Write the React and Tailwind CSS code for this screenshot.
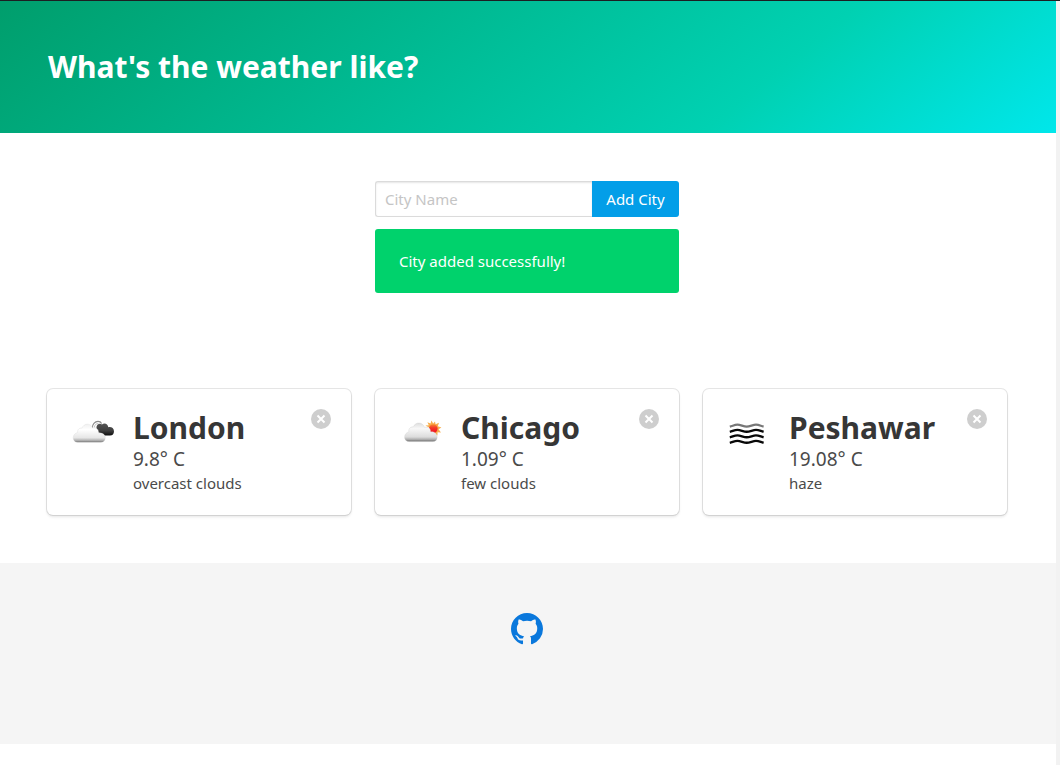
import React, { useState } from "react";

function OvercastIcon() {
  return (
    <svg viewBox="0 0 50 50" className="size-[50px]" aria-hidden="true">
      <defs>
        <linearGradient id="overcast-light" x1="0" y1="0" x2="0" y2="1">
          <stop offset="0" stopColor="#f0f0f0" />
          <stop offset="0.3" stopColor="#ffffff" />
          <stop offset="0.75" stopColor="#e6e6e6" />
          <stop offset="0.9" stopColor="#b0b0b0" />
          <stop offset="1" stopColor="#707070" />
        </linearGradient>
        <linearGradient id="overcast-dark" x1="0" y1="0" x2="0" y2="1">
          <stop offset="0" stopColor="#555555" />
          <stop offset="0.6" stopColor="#3e3e3e" />
          <stop offset="1" stopColor="#0c0c0c" />
        </linearGradient>
      </defs>
      <path d="M25.4 19C25 15.4 28 12.4 31 12.4C32.6 12.4 34 13.2 34.6 14.4" fill="none" stroke="#8a8a8a" strokeWidth="1.1" />
      <path d="M27.4 18.4C27.4 16 29.4 14.2 31.4 14.6" fill="none" stroke="#b4b4b4" strokeWidth="0.8" />
      <path d="M29.6 17.5C30 14.6 33.4 13.8 35 15.6C37 13.4 41 14.6 41.3 18.2C44 17.4 47 19 47 22.2C47 24.8 45.5 26.6 43 26.6H36C34.5 26.6 33.6 25.4 33.4 23.8C31 24 30 22.6 29.8 20.8C29.2 19.8 29.4 18.8 29.6 17.5Z" fill="url(#overcast-dark)" />
      <path d="M10.5 33.3C7.8 33.3 6.2 31.2 6.2 28.8C6.2 26 8.2 24 10.6 23.6C10.2 20.6 12.6 18.6 15 19.2C16.4 14.4 23.4 13.4 25.6 18.8C29 18 32 20 31.6 24.2C35.4 23.4 38.3 25.6 38.3 28.8C38.3 31.4 36.8 33.3 34 33.3Z" fill="url(#overcast-light)" stroke="#d4d4d4" strokeWidth="0.3" />
    </svg>
  );
}

function FewCloudsIcon() {
  return (
    <svg viewBox="0 0 50 50" className="size-[50px]" aria-hidden="true">
      <defs>
        <linearGradient id="few-light" x1="0" y1="0" x2="0" y2="1">
          <stop offset="0" stopColor="#dedede" />
          <stop offset="0.3" stopColor="#f8f8f8" />
          <stop offset="0.75" stopColor="#dcdcdc" />
          <stop offset="0.9" stopColor="#a8a8a8" />
          <stop offset="1" stopColor="#666666" />
        </linearGradient>
        <linearGradient id="few-sun" x1="0" y1="0" x2="0" y2="1">
          <stop offset="0" stopColor="#f88a2e" />
          <stop offset="0.4" stopColor="#f43a2a" />
          <stop offset="1" stopColor="#f00c1e" />
        </linearGradient>
      </defs>
      <path d="M36.4 11.6L38.2 14.4L40 12.4L40.6 15.2L44 13.8L42.8 17.2L46.4 18.6L43.6 20.2L46 23.6L42.6 23.2L42.4 26.6L38 25L33 22L34 18.4L30.4 16.6L33.8 16.2L32.4 13.2L35.6 14.6Z" fill="#f7ae4e" />
      <circle cx="38.3" cy="19.6" r="4.3" fill="url(#few-sun)" />
      <path d="M14 32.6C11.2 32.6 9.6 30.6 9.6 28.2C9.6 25.4 11.4 23.4 13.8 23C13.2 19.6 15.6 17.6 18.4 17.8C20.2 12.6 27.8 12.8 29.6 18.4C32.6 17.2 35.8 19.2 35.6 22.8C39.6 22.2 42.2 24.8 42.2 28.2C42.2 30.8 40.6 32.6 38 32.6Z" fill="url(#few-light)" stroke="#c8c8c8" strokeWidth="0.3" />
    </svg>
  );
}

function HazeIcon() {
  return (
    <svg viewBox="0 0 50 50" className="size-[50px]" fill="none" stroke="#080808" strokeWidth="2.4" aria-hidden="true">
      <path d="M6.8 17.6C10 16.8 11.5 15.7 14.5 15.7S20.5 17.6 23.7 17.6S30 15.7 33 15.7S37.5 16.8 40.6 17.6" stroke="#777777" strokeWidth="2.2" />
      <path d="M6.8 22.8C10 22 11.5 20.9 14.5 20.9S20.5 22.8 23.7 22.8S30 20.9 33 20.9S37.5 22 40.6 22.8" />
      <path d="M6.8 28.3C10 27.5 11.5 26.4 14.5 26.4S20.5 28.3 23.7 28.3S30 26.4 33 26.4S37.5 27.5 40.6 28.3" />
      <path d="M6.8 33.8C10 33 11.5 31.9 14.5 31.9S20.5 33.8 23.7 33.8S30 31.9 33 31.9S37.5 33 40.6 33.8" />
    </svg>
  );
}

const initialCities = [
  { name: "London", temperature: "9.8° C", description: "overcast clouds", Icon: OvercastIcon },
  { name: "Chicago", temperature: "1.09° C", description: "few clouds", Icon: FewCloudsIcon },
  { name: "Peshawar", temperature: "19.08° C", description: "haze", Icon: HazeIcon },
];

function CityCard({ city, onDelete }) {
  const { name, temperature, description, Icon } = city;
  return (
    <article className="flex items-start gap-4 rounded-md bg-white p-5 shadow-[0_2px_3px_rgba(10,10,10,0.1),0_0_0_1px_rgba(10,10,10,0.1)]">
      <Icon />
      <div className="min-w-0 flex-1 text-[#4a4a4a]">
        <h2 className="text-3xl leading-[38px] font-bold text-[#363636]">{name}</h2>
        <p className="text-[19px] leading-6">{temperature}</p>
        <p className="text-[15px] leading-6">{description}</p>
      </div>
      <button
        type="button"
        aria-label={"Remove " + name}
        onClick={onDelete}
        className="flex size-5 shrink-0 items-center justify-center rounded-full bg-[#cecece] text-white"
      >
        <svg viewBox="0 0 10 10" className="size-[10px]" stroke="currentColor" strokeWidth="2" aria-hidden="true">
          <path d="M1.5 1.5L8.5 8.5M8.5 1.5L1.5 8.5" />
        </svg>
      </button>
    </article>
  );
}

export default function App() {
  const [cities, setCities] = useState(initialCities);
  return (
    <div className="flex min-h-screen flex-col border-t border-[#1c1f22] bg-white font-['Noto_Sans',sans-serif]">
      <div className="flex flex-1">
        <div className="min-w-0 flex-1">
          <header className="bg-[linear-gradient(141deg,#009e6c_0%,#00d1b2_71%,#00e7eb_100%)] px-12 py-12">
            <h1 className="text-3xl leading-9 font-bold text-white">What's the weather like?</h1>
          </header>

          <section className="grid grid-cols-3 gap-6 py-12 pr-[49px] pl-[47px]">
            <div className="col-start-2 flex flex-col gap-3">
              <form className="flex h-9" onSubmit={(event) => event.preventDefault()}>
                <input
                  type="text"
                  aria-label="City Name"
                  placeholder="City Name"
                  className="min-w-0 flex-1 rounded-l-[3px] border border-r-0 border-[#dbdbdb] px-[9px] text-[15px] text-[#363636] shadow-[inset_0_1px_2px_rgba(10,10,10,0.1)] outline-none placeholder:text-[#c5c5c5]"
                />
                <button type="submit" className="w-[87px] rounded-r-[3px] bg-[#039ee8] text-[15px] text-white">
                  Add City
                </button>
              </form>
              <div role="status" className="rounded-[3px] bg-[#00d26c] px-6 py-5 text-[15px] leading-6 text-white">
                City added successfully!
              </div>
            </div>
          </section>

          <section className="grid grid-cols-3 gap-6 py-12 pr-[49px] pl-[47px]">
            {cities.map((city) => (
              <CityCard
                key={city.name}
                city={city}
                onDelete={() => setCities(cities.filter((item) => item !== city))}
              />
            ))}
          </section>

          <footer className="flex justify-center bg-[#f5f5f5] pt-[50px] pr-[49px] pb-[99px] pl-[47px]">
            <a href="https://github.com" aria-label="GitHub" className="text-[#0a78dc]">
              <svg viewBox="0 0 16 16" className="size-8" fill="currentColor" aria-hidden="true">
                <path d="M8 0C3.58 0 0 3.58 0 8c0 3.54 2.29 6.53 5.47 7.59.4.07.55-.17.55-.38 0-.19-.01-.82-.01-1.49-2.01.37-2.53-.49-2.69-.94-.09-.23-.48-.94-.82-1.13-.28-.15-.68-.52-.01-.53.63-.01 1.08.58 1.23.82.72 1.21 1.87.87 2.33.66.07-.52.28-.87.51-1.07-1.78-.2-3.64-.89-3.64-3.95 0-.87.31-1.59.82-2.15-.08-.2-.36-1.02.08-2.12 0 0 .67-.21 2.2.82.64-.18 1.32-.27 2-.27.68 0 1.36.09 2 .27 1.53-1.04 2.2-.82 2.2-.82.44 1.1.16 1.92.08 2.12.51.56.82 1.27.82 2.15 0 3.07-1.87 3.75-3.65 3.95.29.25.54.73.54 1.48 0 1.07-.01 1.93-.01 2.2 0 .21.15.46.55.38A8.013 8.013 0 0016 8c0-4.42-3.58-8-8-8z" />
              </svg>
            </a>
          </footer>
        </div>
        <div className="w-1 shrink-0 bg-[#f2f2f2]" />
      </div>
    </div>
  );
}
